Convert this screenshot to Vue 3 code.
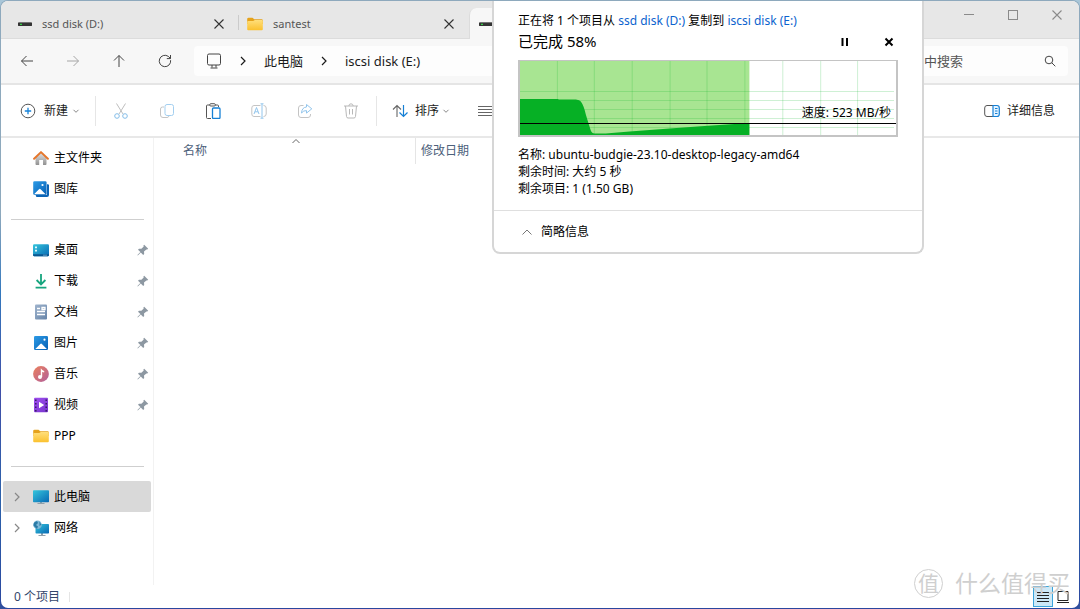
<script setup>
import { ref } from 'vue'

const search = ref('')
const quick = [
  { id: 'home', label: '主文件夹' },
  { id: 'gallery', label: '图库' },
]
const pinned = [
  { id: 'desktop', label: '桌面', pin: true },
  { id: 'download', label: '下载', pin: true },
  { id: 'document', label: '文档', pin: true },
  { id: 'picture', label: '图片', pin: true },
  { id: 'music', label: '音乐', pin: true },
  { id: 'video', label: '视频', pin: true },
  { id: 'folder', label: 'PPP' },
]
const places = [
  { id: 'pc', label: '此电脑', open: true, selected: true },
  { id: 'network', label: '网络', open: true },
]
const groups = [quick, pinned, places]
const columns = [38, 75, 113, 151, 188, 226, 264, 302, 339]
const rows = [31, 40, 49, 58, 67]
</script>

<template>
  <svg class="defs" aria-hidden="true">
    <defs>
      <linearGradient id="g-blue" x2="1" y2="1"><stop stop-color="#2d9be6" /><stop offset="1" stop-color="#0560b5" /></linearGradient>
      <linearGradient id="g-teal" x2="1" y2="1"><stop stop-color="#35c6dc" /><stop offset="1" stop-color="#0868b4" /></linearGradient>
      <linearGradient id="g-fold" x2="0" y2="1"><stop stop-color="#ffdf7c" /><stop offset="1" stop-color="#fbc12f" /></linearGradient>
      <linearGradient id="g-grey" x2="0" y2="1"><stop stop-color="#e2e2e2" /><stop offset="1" stop-color="#929292" /></linearGradient>
      <linearGradient id="g-doc" x2="1" y2="1"><stop stop-color="#9fb4cd" /><stop offset="1" stop-color="#6583a8" /></linearGradient>
      <linearGradient id="g-music" x2="1" y2="1"><stop stop-color="#ec805c" /><stop offset="1" stop-color="#b1609c" /></linearGradient>
      <linearGradient id="g-video" x2="1" y2="1"><stop stop-color="#a04ff0" /><stop offset="1" stop-color="#7634cc" /></linearGradient>
      <symbol id="i-home" viewBox="0 0 16 16"><path d="M2.5 7.5 8 2.5l5.500 5V14q0 .9-.9.900H10V10H6.200v4.900H3.400q-.9 0-.9-.9z" fill="url(#g-grey)" /><path d="m1.100 8.700 6.900-6.600 6.900 6.600" fill="none" stroke="#e5762b" stroke-width="2" stroke-linecap="round" stroke-linejoin="round" /></symbol>
      <symbol id="i-gallery" viewBox="0 0 16 16"><path d="M14 3.200h1.200q.8.400.8 1.100V14q0 2-2 2H4q-.9 0-1.200-1V14H13q1 0 1-1z" fill="#0c64b5" /><rect width="13.400" height="13.600" x=".2" y=".3" rx="1.300" fill="url(#g-blue)" /><path d="m1 13.200 5-5q.8-.8 1.600 0l5 5z" fill="#fff" /><circle cx="9.500" cy="4" r="1.100" fill="#fff" /></symbol>
      <symbol id="i-desktop" viewBox="0 0 16 16"><rect y="2.200" width="16" height="12" rx="1.200" fill="url(#g-teal)" /><path d="M2 4.500h2v1.800H2zm0 3.300h2v1.800H2z" fill="#dffaff" /><path d="M0 12.300h16v.8q0 1.100-1.200 1.100H1.200Q0 14.200 0 13.100z" fill="#0b5791" /><path d="M10.500 13.200h1m1 0h1" stroke="#bde7ff" /></symbol>
      <symbol id="i-download" viewBox="0 0 16 16"><path d="M8 1v10M3.600 7 8 11.400 12.400 7M2.600 14.700h10.800" fill="none" stroke="#17a57e" stroke-width="1.800" /></symbol>
      <symbol id="i-document" viewBox="0 0 16 16"><rect x="2" y=".5" width="12" height="15" rx="1" fill="url(#g-doc)" /><path d="M4 4.500h3m2-1h3v2H9zM4 7.500h8M4 10.500h8" fill="none" stroke="#fff" stroke-width="1.300" /></symbol>
      <symbol id="i-picture" viewBox="0 0 16 16"><rect x="1" y="1" width="14" height="14" rx="1.200" fill="url(#g-blue)" /><path d="m2.300 14 5-5q.8-.8 1.600 0l5 5z" fill="#fff" /><circle cx="11.500" cy="4.700" r="1.100" fill="#fff" /></symbol>
      <symbol id="i-music" viewBox="0 0 16 16"><circle cx="8" cy="8" r="7.900" fill="url(#g-music)" /><path d="M8.500 11V4.300q1 1.300 2.700 1.500" fill="none" stroke="#fff" stroke-width="1.400" /><circle cx="7" cy="11" r="2" fill="#fff" /></symbol>
      <symbol id="i-video" viewBox="0 0 16 16"><rect x="1" y=".8" width="14" height="14.500" rx="1" fill="url(#g-video)" /><path d="M6 4.800v6.400L11.200 8z" fill="#fff" /><path d="M2.800 2.500v12M13.200 2.500v12" stroke="#32175d" stroke-width="1.400" stroke-dasharray="1.500 2" /></symbol>
      <symbol id="i-folder" viewBox="0 0 16 16"><path d="M.2 3q0-1.300 1.300-1.300h4L7.300 3.300h7.400q1.100 0 1.100 1.200V8H.2z" fill="#e5a21b" /><path d="M.2 6q0-1 1-1h5l1.700-1.100h6.900q1 0 1 1v8.300q0 1-1 1H1.200q-1 0-1-1z" fill="url(#g-fold)" /></symbol>
      <symbol id="i-pc" viewBox="0 0 16 16"><path d="M7 12h2v2h2.500v1h-7v-1H7z" fill="#91a0aa" /><rect y="1.200" width="16" height="12" rx=".8" fill="url(#g-teal)" /></symbol>
      <symbol id="i-network" viewBox="0 0 16 16"><path d="M8 13h2v2h2.500v1H5.500v-1H8z" fill="#91a0aa" /><rect x="2.500" y="4" width="13.500" height="9.500" rx=".8" fill="url(#g-teal)" /><circle cx="4.500" cy="4.800" r="4.300" fill="#7eb8d7" /><path d="M1 2.800 4 1l1 2-2 2 2 1.500L4 9Q2 7 .5 5.500M6.500 1.500l1.800 3.300L6.500 6z" fill="#2b7ba6" /></symbol>
      <symbol id="i-pin" viewBox="0 0 12 12"><path d="M7.200.8 11.200 4.800l-1 .8-.8-.2L7 7.600l.2 2.300-1 1-2.400-2.500L.8 11.400l-.4-.4 3-3L1 5.700l1-1 2.400.1L6.700 2.500l-.3-.9z" fill="#8d98a2" /></symbol>
      <symbol id="i-close" viewBox="0 0 12 12"><path d="m1.500 1.500 9 9m0-9-9 9" fill="none" stroke="currentColor" stroke-width="1.100" /></symbol>
      <symbol id="i-drive" viewBox="0 0 14 8"><path d="M1 2h12l1 1H0z" fill="#b5b5b5" /><rect y="2.500" width="14" height="3.500" rx=".4" fill="#343434" /><path d="M2 4.300h2" stroke="#35d045" stroke-width="1.200" /></symbol>
      <symbol id="i-down" viewBox="0 0 8 8"><path d="m1.500 2.800 2.500 2.500 2.500-2.500" fill="none" stroke="#888" /></symbol>
      <symbol id="i-right" viewBox="0 0 8 10"><path d="m2 1 4 4-4 4" fill="none" stroke="currentColor" stroke-width="1.200" /></symbol>
    </defs>
  </svg>

  <div class="window">
    <header class="tabs">
      <div class="tab">
        <svg class="drive"><use href="#i-drive" /></svg><span>ssd disk (D:)</span>
        <button aria-label="关闭"><svg class="s12"><use href="#i-close" /></svg></button>
      </div>
      <div class="tab second">
        <svg class="s16"><use href="#i-folder" /></svg><span>santest</span>
        <button aria-label="关闭"><svg class="s12"><use href="#i-close" /></svg></button>
      </div>
      <div class="tab active"><svg class="drive"><use href="#i-drive" /></svg></div>
      <div class="controls">
        <button aria-label="最小化"><svg class="s12" viewBox="0 0 12 12"><path d="M1 5.500h10" stroke="currentColor" /></svg></button>
        <button aria-label="最大化"><svg class="s12" viewBox="0 0 12 12"><rect x="1.500" y="1.500" width="9" height="9" fill="none" stroke="currentColor" /></svg></button>
        <button aria-label="关闭"><svg class="s12"><use href="#i-close" /></svg></button>
      </div>
    </header>

    <div class="address">
      <nav class="arrows">
        <button aria-label="后退"><svg class="s14" viewBox="0 0 14 14"><path d="M13 7H1.500m5-5-5 5 5 5" /></svg></button>
        <button aria-label="前进" class="dim"><svg class="s14" viewBox="0 0 14 14"><path d="M1 7h11.500m-5-5 5 5-5 5" /></svg></button>
        <button aria-label="向上"><svg class="s14" viewBox="0 0 14 14"><path d="M7 13V1.500m-5 5 5-5 5 5" /></svg></button>
        <button aria-label="刷新"><svg class="s14" viewBox="0 0 14 14"><path d="M12.600 6.200A5.700 5.700 0 1 1 10.200 2.300L12.500 4.400M12.500 1v3.600H8.800" /></svg></button>
      </nav>
      <div class="path">
        <svg class="s16" viewBox="0 0 16 16"><rect x="1.500" y="1" width="13" height="11" rx="1.500" /><path d="M6 12v2.500m4-2.500v2.500M4.500 15h7" /></svg>
        <svg class="chev"><use href="#i-right" /></svg>
        <span>此电脑</span>
        <svg class="chev"><use href="#i-right" /></svg>
        <span>iscsi disk (E:)</span>
      </div>
      <label class="search">
        <input v-model="search" type="text" placeholder="中搜索" aria-label="搜索" />
        <svg class="s12" viewBox="0 0 12 12"><circle cx="5" cy="5" r="3.800" /><path d="m7.800 7.800 3.500 3.500" /></svg>
      </label>
    </div>

    <div class="toolbar">
      <button class="new">
        <svg class="s16" viewBox="0 0 16 16"><circle cx="8" cy="8" r="6.800" fill="none" stroke="#555" /><path d="M8 4.800v6.400M4.800 8h6.400" stroke="#1683d9" stroke-width="1.300" /></svg>
        <span>新建</span><svg class="s8"><use href="#i-down" /></svg>
      </button>
      <div class="actions">
        <button aria-label="剪切"><svg class="s16" viewBox="0 0 16 16" fill="none"><path d="M3.500.5 10 11M12.500.5 6 11" stroke="#bdbdbd" /><circle cx="4" cy="13" r="2.300" stroke="#83bde8" /><circle cx="12" cy="13" r="2.300" stroke="#83bde8" /></svg></button>
        <button aria-label="复制"><svg class="s16" viewBox="0 0 16 16" fill="none"><path d="M5 4H3.500Q1.500 4 1.500 6v6q0 2.500 2.500 2.500h4q1.500 0 2-1.500" stroke="#c4c4c4" /><rect x="6" y="1.500" width="8.500" height="11" rx="2" stroke="#a3cff0" /></svg></button>
        <button aria-label="粘贴"><svg class="s16" viewBox="0 0 16 16" fill="none"><path d="M5 2H2.500q-1 0-1 1v11.500q0 1 1 1H6M10 2h2.500q1 0 1 1v1" stroke="#555" /><rect x="4.800" y=".7" width="5.500" height="2.300" rx="1" stroke="#555" /><rect x="7.500" y="5" width="7.500" height="10.500" rx="1" stroke="#1680d5" stroke-width="1.300" /></svg></button>
        <button aria-label="重命名"><svg class="s16" viewBox="0 0 16 16" fill="none"><path d="M9.500 2.500H3Q.8 2.500.8 5v6q0 2.500 2.200 2.500h6.500m3-11q2.700 0 2.700 2.500v6q0 2.500-2.700 2.500" stroke="#c4c4c4" /><path d="M11 1v14M9.500.8h3M9.500 15.200h3M3 11l2.500-6.500L8 11M4 8.800h3" stroke="#92c5ec" /></svg></button>
        <button aria-label="共享"><svg class="s16" viewBox="0 0 16 16" fill="none"><path d="M6.500 2.500H4Q1.500 2.500 1.500 5v7Q1.500 14.500 4 14.500h7q2.500 0 2.500-2.500v-1" stroke="#c4c4c4" /><path d="M9.500 4V1.500l5.300 4.300-5.300 4.300V7.600Q6.500 7.300 4.500 10q.4-5.600 5-6z" stroke="#92c5ec" /></svg></button>
        <button aria-label="删除"><svg class="s16" viewBox="0 0 16 16" fill="none"><path d="M1 3h14M5.800 3Q6 .8 8 .8T10.200 3M2.500 3l1 10.500q.2 1.500 1.500 1.500h6q1.300 0 1.500-1.500L13.500 3M6.500 6v5.500m3-5.500v5.500" stroke="#b8b8b8" /></svg></button>
      </div>
      <button class="sort">
        <svg class="s16" viewBox="0 0 16 16" fill="none"><path d="M5 14V2.500M1 6.500l4-4 4 4" stroke="#666" stroke-width="1.100" /><path d="M11.500 2v11.500m-4-4 4 4 4-4" stroke="#1680d5" stroke-width="1.200" /></svg>
        <span>排序</span><svg class="s8"><use href="#i-down" /></svg>
      </button>
      <button class="view" aria-label="查看"><svg class="s16" viewBox="0 0 16 16"><path d="M0 3.500h16M0 6.500h16M0 9.500h16M0 12.500h16" stroke="#666" /></svg></button>
      <button class="details">
        <svg class="s16" viewBox="0 0 16 16" fill="none"><path d="M9 2.500H3Q.7 2.500.7 5v6q0 2.500 2.300 2.500h6" stroke="#555" /><path d="M9 2.500h4q2.300 0 2.300 2.500v6q0 2.500-2.300 2.500H9z" fill="#e4f3ff" stroke="#1680d5" stroke-width="1.200" /><path d="M11 5.500h2.500M11 8h2.500M11 10.500h2.500" stroke="#1680d5" /></svg>
        <span>详细信息</span>
      </button>
    </div>

    <main class="body">
      <aside>
        <ul v-for="(group, i) in groups" :key="i">
          <li v-for="item in group" :key="item.id" :class="{ selected: item.selected }">
            <svg v-if="item.open" class="expand"><use href="#i-right" /></svg>
            <svg class="s16 place"><use :href="'#i-' + item.id" /></svg>
            <span>{{ item.label }}</span>
            <svg v-if="item.pin" class="pin"><use href="#i-pin" /></svg>
          </li>
        </ul>
      </aside>
      <section class="files">
        <div class="columns">
          <div class="name">名称<svg class="up" viewBox="0 0 10 6"><path d="m1.500 5 3.500-3.500L8.500 5" fill="none" stroke="#666" /></svg></div>
          <div class="date">修改日期</div>
        </div>
      </section>
    </main>

    <footer>
      <span class="count">0 个项目</span>
      <div class="modes">
        <button class="on" aria-label="列表"><svg class="s14" viewBox="0 0 14 14"><path d="M1 2.500h12M1 5.500h12M1 8.500h12M1 11.500h12" /></svg></button>
        <button aria-label="缩略图"><svg class="s14" viewBox="0 0 14 14"><path d="M2 1.500h10v9H2zM1 12.500h12" fill="none" /></svg></button>
      </div>
    </footer>

    <section class="dialog">
      <div class="info">
        <p>正在将 1 个项目从 <a href="#">ssd disk (D:)</a> 复制到 <a href="#">iscsi disk (E:)</a></p>
        <div class="head">
          <h1>已完成 58%</h1>
          <button aria-label="暂停"><svg class="s10" viewBox="0 0 10 10"><path d="M2.500 1v8M7 1v8" stroke="#000" stroke-width="2" /></svg></button>
          <button aria-label="取消"><svg class="s10" viewBox="0 0 10 10"><path d="m1.500 1.500 7 7m0-7-7 7" stroke="#000" stroke-width="2" /></svg></button>
        </div>
        <div class="chart">
          <svg viewBox="0 0 377 74" preserveAspectRatio="none">
            <rect width="377" height="74" fill="#fff" />
            <rect width="230" height="74" fill="#a8e592" />
            <g fill="none" stroke="#06b025" stroke-opacity=".2">
              <path v-for="x in columns" :key="x" :d="`M${x - 0.5} 0V74`" />
              <path v-for="y in rows" :key="y" :d="`M0 ${y - 0.5}H375`" />
            </g>
            <path d="M0 38h38l1 .5h17q4 .5 5 2 3 4 5 13 3 10 5 16 1 3 4 3h11l24-2 40-3 35-2.500 45-3V74H0z" fill="#06b025" />
            <path d="M0 62.500h377" stroke="#000" />
          </svg>
          <span class="speed">速度: 523 MB/秒</span>
        </div>
        <p>名称: ubuntu-budgie-23.10-desktop-legacy-amd64</p>
        <p>剩余时间: 大约 5 秒</p>
        <p>剩余项目: 1 (1.50 GB)</p>
      </div>
      <button class="less"><svg class="up" viewBox="0 0 10 6"><path d="M.5 5.500 5 1l4.500 4.500" fill="none" stroke="#777" /></svg>简略信息</button>
    </section>

    <div class="mark"><span class="seal">值</span><span>什么值得买</span></div>
  </div>
</template>

<style>
body { margin: 0; background: linear-gradient(#a9c6d8, #31509c); }
</style>

<style scoped>
* { box-sizing: border-box; }
.defs { position: absolute; width: 0; height: 0; }
.window {
  position: relative; display: flex; flex-direction: column; min-height: 100vh; overflow: hidden;
  font: 12px/18px "Noto Sans", "Noto Sans CJK SC", sans-serif; color: #1b1b1b;
  border: 1px solid transparent; border-radius: 8px;
  background: linear-gradient(#fff, #fff) padding-box, linear-gradient(#8ea9bd 0%, #8ea9bd 35%, #3478bd 48%, #404fa8 64%, #2c62ab 82%, #2b479f 100%) border-box;
}
button { display: flex; align-items: center; justify-content: center; padding: 0; border: 0; background: none; font: inherit; color: inherit; }
svg { display: block; flex: none; }
ul { margin: 0; padding: 0; list-style: none; }
p, h1 { margin: 0; font-weight: 400; }
.s8 { width: 8px; height: 8px; }
.s10 { width: 10px; height: 10px; }
.s12 { width: 12px; height: 12px; }
.s14 { width: 14px; height: 14px; }
.s16 { width: 16px; height: 16px; }

.tabs { display: flex; height: 38px; background: #e7e7e7; border-bottom: 1px solid #dcdcdc; color: #555; font-size: 11px; }
.tab { display: flex; align-items: center; gap: 10px; width: 237px; padding: 8px 13px 0 17px; position: relative; }
.tab span { flex: 1; }
.tab button { color: #333; }
.drive { width: 14px; height: 8px; }
.tab.second { width: 231px; padding: 8px 14px 0 9px; }
.tab.second::before { content: ""; position: absolute; left: 0; top: 14px; height: 15px; border-left: 1px solid #cbcbcb; }
.tab.active { align-items: flex-start; height: 31px; margin-top: 7px; padding: 12px 10px 0 9px; background: #f7f7f7; border-left: 1px solid #dcdcdc; border-radius: 7px 7px 0 0; }
.controls { display: flex; margin-left: auto; color: #8a8a8a; }
.controls button { width: 44px; height: 28px; }

.address { display: flex; height: 46px; padding: 7px 11px 7px 3px; background: #f7f7f7; border-bottom: 2px solid #e5e5e5; font-size: 13px; }
.address svg { fill: none; stroke: #444; }
.arrows { display: flex; width: 190px; }
.arrows button { width: 46px; }
.arrows .dim { opacity: .45; }
.path { display: flex; align-items: center; flex: 1; padding-left: 12px; background: #fdfdfd; border-radius: 4px; }
.path .chev { width: 8px; height: 10px; margin: 0 17px; }
.search { display: flex; align-items: center; width: 155px; margin-left: 10px; padding-right: 12px; background: #fdfdfd; border-radius: 4px; }
.search input { flex: 1; min-width: 0; padding: 0 0 0 11px; border: 0; outline: 0; background: none; font: inherit; color: #333; }
.search input::placeholder { color: #555; opacity: 1; }

.toolbar { display: flex; align-items: center; height: 53px; padding: 0 24px 0 19px; border-bottom: 2px solid #e8e8e8; }
.toolbar button { height: 30px; }
.new { gap: 8px; width: 75px; }
.new, .sort { white-space: nowrap; }
.toolbar .new, .toolbar .sort { justify-content: flex-start; }
.new .s8, .sort .s8 { margin-left: -4px; }
.actions { display: flex; padding: 0 2px; border: 1px solid #e6e6e6; border-width: 0 1px; }
.actions button { width: 46px; }
.sort { gap: 7px; width: 86px; padding-left: 15px; }
.view { margin-left: 15px; }
.details { gap: 7px; margin-left: auto; }

.body { display: flex; flex: 1; }
aside { width: 153px; padding: 4px 2px 0 2px; border-right: 1px solid #f2f2f2; }
ul + ul { position: relative; margin-top: 30px; }
ul + ul::before { content: ""; position: absolute; left: 8px; right: 7px; top: -15px; border-top: 1px solid #cfcfcf; }
li { position: relative; display: flex; align-items: center; height: 31px; padding: 0 2px 0 30px; gap: 5px; color: #000; border-radius: 2px; }
li.selected { background: #d9d9d9; }
.expand { position: absolute; left: 10px; width: 8px; height: 10px; color: #888; }
.pin { width: 12px; height: 12px; margin-left: auto; }
.files { flex: 1; }
.columns { display: flex; height: 26px; color: #4c607a; line-height: 26px; }
.name { position: relative; width: 262px; padding-left: 29px; border-right: 1px solid #e5e5e5; }
.up { width: 10px; height: 6px; }
.name .up { position: absolute; left: 137px; top: 0; }
.date { padding-left: 5px; }

footer { display: flex; justify-content: space-between; align-items: center; height: 23px; padding: 0 6px 0 13px; color: #33466b; }
.count { padding-right: 10px; background: linear-gradient(#e5e5e5, #e5e5e5) right / 1px 10px no-repeat; }
.modes { display: flex; height: 21px; }
.modes button { width: 20px; }
.modes .on { border: 1px solid #3aa4dc; background: #cce8f7; }
.modes path { stroke: #222; }

.dialog { position: absolute; left: 491px; top: -1px; width: 432px; background: #fff; border: 2px solid #d6d6d6; border-top: 1px solid #e7eff3; border-radius: 0 0 8px 8px; color: #000; }
.info { padding: 11px 24px 13px; line-height: 17px; }
a { color: #0b63ce; text-decoration: none; }
.head { display: flex; align-items: center; height: 26px; gap: 34px; padding-right: 4px; }
h1 { flex: 1; font-size: 15px; line-height: 24px; padding-bottom: 2px; }
.chart { position: relative; height: 77px; margin: 5px 0 9px; border: 2px solid #c4c4c4; border-width: 1px 2px 2px; }
.chart svg { width: 100%; height: 100%; }
.speed { position: absolute; right: 5px; top: 43px; }
.less { width: 100%; height: 42px; justify-content: flex-start; gap: 9px; padding-left: 28px; border-top: 1px solid #dfdfdf; }

.mark { position: absolute; right: 9px; bottom: 10px; display: flex; align-items: center; gap: 12px; font-size: 23px; line-height: 30px; color: #cfcfcf; pointer-events: none; }
.seal { width: 29px; height: 29px; border: 1px solid #cfcfcf; border-radius: 50%; text-align: center; line-height: 27px; font-size: 21px; }
</style>
